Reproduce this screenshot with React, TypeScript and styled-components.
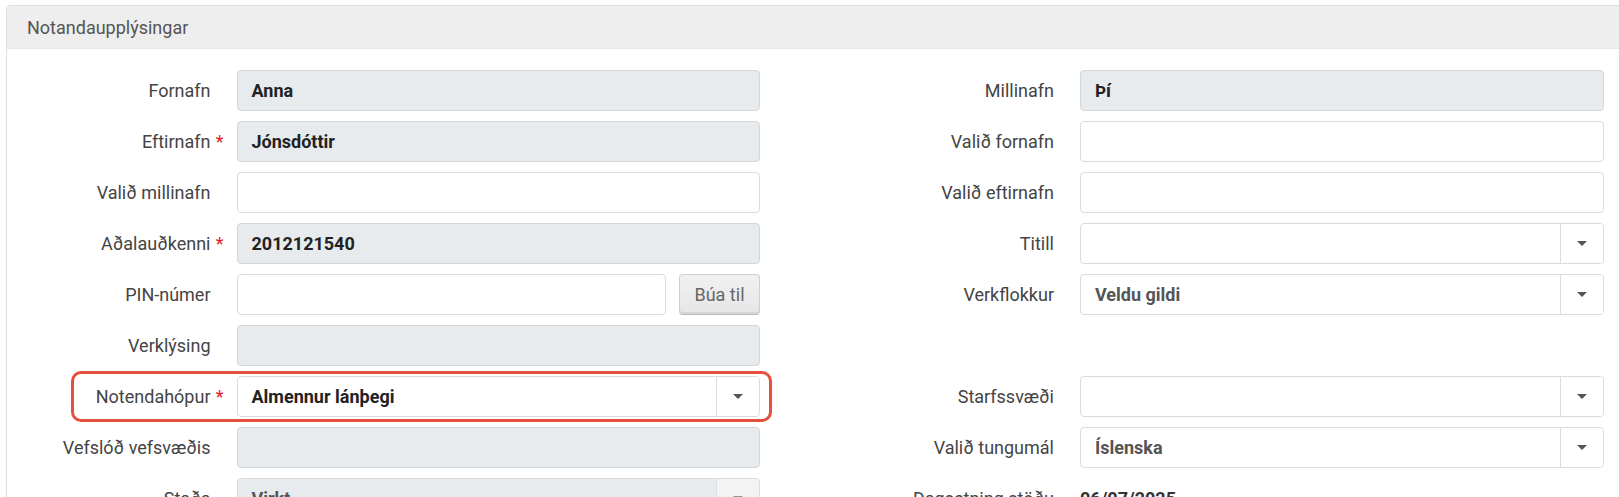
import React from "react";
import styled, { createGlobalStyle } from "styled-components";

const Global = createGlobalStyle`
  html, body { margin: 0; padding: 0; background: #ffffff; overflow: hidden; }
  body { font-family: Roboto, "Liberation Sans", Arial, sans-serif; }
  * { box-sizing: border-box; }
`;

const Page = styled.div`
  padding: 5px 0 0 6px;
  width: 1619px;
  height: 497px;
  overflow: hidden;
`;

const Panel = styled.section`
  width: 1650px;
  border: 1px solid #dddddd;
  border-radius: 4px 0 0 0;
  background: #ffffff;
`;

const PanelHeader = styled.header`
  height: 43px;
  background: #eeeeee;
  border-bottom: 1px solid #e8e8e8;
  display: flex;
  align-items: center;
  padding-left: 20px;
  font-size: 18px;
  color: #555555;
`;

const PanelBody = styled.div`
  padding-top: 21px;
  display: flex;
  flex-direction: column;
  gap: 10px;
`;

const Row = styled.div`
  position: relative;
  display: grid;
  grid-template-columns: 229.5px 523.5px 320px 524px;
  height: 41px;
  align-items: center;
`;

const Label = styled.label`
  position: relative;
  text-align: right;
  padding-right: 26px;
  font-size: 18px;
  color: #444444;
  white-space: nowrap;
`;

const Required = styled.span`
  position: absolute;
  right: 13px;
  top: 0;
  color: #e02020;
  font-size: 18px;
`;

const Input = styled.div<{ $disabled?: boolean }>`
  height: 41px;
  border: 1px solid ${(p) => (p.$disabled ? "#d3d7db" : "#d9dcdf")};
  border-radius: 4px;
  background: ${(p) => (p.$disabled ? "#e8ebee" : "#ffffff")};
  display: flex;
  align-items: center;
  padding-left: 14px;
  font-size: 18px;
  font-weight: 700;
  color: #222222;
`;

const InputGroup = styled.div`
  display: flex;
  gap: 13px;
  height: 41px;
  & > ${Input} { flex: 1; }
`;

const Button = styled.button`
  width: 81px;
  height: 41px;
  border: 1px solid #cfcfcf;
  border-bottom-color: #b9b9b9;
  border-radius: 4px;
  background: linear-gradient(#f1f1f1, #e6e6e6);
  box-shadow: inset 0 -2px 0 #d6d6d6;
  font-family: inherit;
  font-size: 18px;
  color: #666666;
  padding: 0;
`;

const Select = styled.div<{ $disabled?: boolean }>`
  height: 41px;
  display: flex;
  border: 1px solid #d9dcdf;
  border-radius: 4px;
  overflow: hidden;
  background: ${(p) => (p.$disabled ? "#e8ebee" : "#ffffff")};
`;

const SelectValue = styled.div<{ $muted?: boolean }>`
  flex: 1;
  display: flex;
  align-items: center;
  padding-left: 14px;
  font-size: 18px;
  font-weight: 700;
  color: ${(p) => (p.$muted ? "#555555" : "#222222")};
`;

const SelectArrow = styled.div<{ $disabled?: boolean }>`
  width: 43px;
  border-left: 1px solid #dcdcdc;
  display: flex;
  align-items: center;
  justify-content: center;
  background: ${(p) => (p.$disabled ? "#f3f3f3" : "#ffffff")};
`;

const Caret = styled.span<{ $disabled?: boolean }>`
  width: 0;
  height: 0;
  border-left: 5px solid transparent;
  border-right: 5px solid transparent;
  border-top: 5px solid ${(p) => (p.$disabled ? "#999999" : "#555555")};
`;

const Static = styled.div`
  font-size: 18px;
  font-weight: 700;
  color: #333333;
`;

const Empty = styled.div``;

const Highlight = styled.div`
  position: absolute;
  left: 64px;
  top: -5px;
  width: 701px;
  height: 51px;
  border: 3px solid #e4503c;
  border-radius: 10px;
  pointer-events: none;
`;

const L = ({ children, req }: { children: React.ReactNode; req?: boolean }) => (
  <Label>
    {children}
    {req && <Required>*</Required>}
  </Label>
);

const Sel = ({ value, muted, disabled }: { value?: string; muted?: boolean; disabled?: boolean }) => (
  <Select $disabled={disabled}>
    <SelectValue $muted={muted}>{value}</SelectValue>
    <SelectArrow $disabled={disabled}>
      <Caret $disabled={disabled} />
    </SelectArrow>
  </Select>
);

export default function App() {
  return (
    <>
      <Global />
      <Page>
        <Panel>
          <PanelHeader>Notandaupplýsingar</PanelHeader>
          <PanelBody>
            <Row>
              <L>Fornafn</L>
              <Input $disabled>Anna</Input>
              <L>Millinafn</L>
              <Input $disabled>Þí</Input>
            </Row>
            <Row>
              <L req>Eftirnafn</L>
              <Input $disabled>Jónsdóttir</Input>
              <L>Valið fornafn</L>
              <Input />
            </Row>
            <Row>
              <L>Valið millinafn</L>
              <Input />
              <L>Valið eftirnafn</L>
              <Input />
            </Row>
            <Row>
              <L req>Aðalauðkenni</L>
              <Input $disabled>2012121540</Input>
              <L>Titill</L>
              <Sel />
            </Row>
            <Row>
              <L>PIN-númer</L>
              <InputGroup>
                <Input />
                <Button type="button">Búa til</Button>
              </InputGroup>
              <L>Verkflokkur</L>
              <Sel value="Veldu gildi" muted />
            </Row>
            <Row>
              <L>Verklýsing</L>
              <Input $disabled />
              <Empty />
              <Empty />
            </Row>
            <Row>
              <Highlight />
              <L req>Notendahópur</L>
              <Sel value="Almennur lánþegi" />
              <L>Starfssvæði</L>
              <Sel />
            </Row>
            <Row>
              <L>Vefslóð vefsvæðis</L>
              <Input $disabled />
              <L>Valið tungumál</L>
              <Sel value="Íslenska" muted />
            </Row>
            <Row>
              <L>Staða</L>
              <Sel value="Virkt" muted disabled />
              <L>Dagsetning stöðu</L>
              <Static>06/07/2025</Static>
            </Row>
          </PanelBody>
        </Panel>
      </Page>
    </>
  );
}
